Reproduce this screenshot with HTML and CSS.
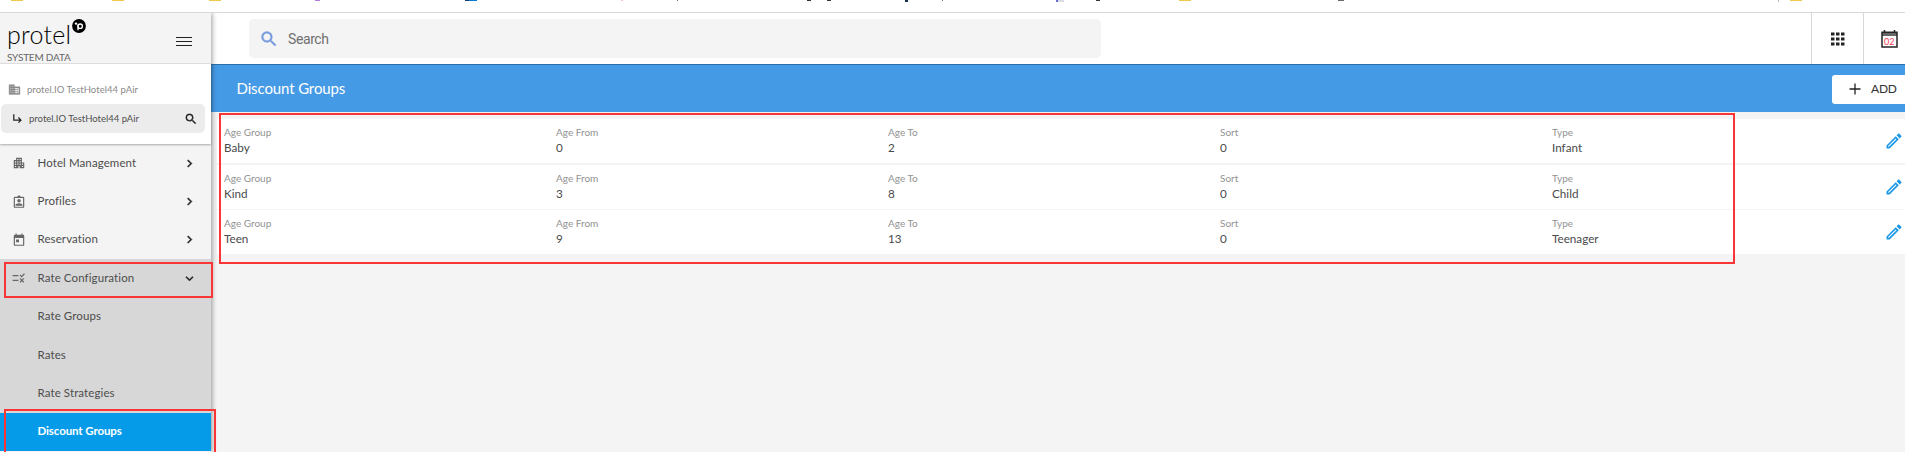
FILE: index.html
```html
<!DOCTYPE html>
<html lang="en">
<head>
<meta charset="utf-8">
<title>Discount Groups</title>
<link rel="stylesheet" href="styles.css">
</head>
<body>
<svg class="defs" aria-hidden="true">
  <symbol id="chev" viewBox="0 0 24 24"><path d="M10 6 8.6 7.4 13.2 12l-4.6 4.6L10 18l6-6z"/></symbol>
  <symbol id="glass" viewBox="0 0 24 24"><path d="M15.5 14h-.79l-.28-.27A6.47 6.47 0 0 0 16 9.5 6.5 6.5 0 1 0 9.5 16c1.61 0 3.09-.59 4.23-1.57l.27.28v.79l5 4.99L20.49 19l-4.99-5zm-6 0C7.01 14 5 11.99 5 9.5S7.01 5 9.5 5 14 7.01 14 9.5 11.99 14 9.5 14z"/></symbol>
  <symbol id="pencil" viewBox="0 0 24 24"><path d="M14.06 9.02l.92.92L5.92 19H5v-.92l9.06-9.06M17.66 3c-.25 0-.51.1-.7.29l-1.83 1.83 3.75 3.75 1.83-1.83a.996.996 0 0 0 0-1.41l-2.34-2.34c-.2-.2-.45-.29-.71-.29zm-3.6 3.19L3 17.25V21h3.75L17.81 9.94l-3.75-3.75z"/></symbol>
</svg>
<div class="bookmarks">
  <i class="bm yellow" style="left:11px"></i><i class="bm yellow" style="left:112px"></i><i class="bm yellow" style="left:209px"></i>
  <i class="bm purple" style="left:315px"></i><i class="bm blue" style="left:465px"></i><i class="bm pink" style="left:621px"></i>
  <i class="bm tick" style="left:677px"></i><i class="bm dark" style="left:807px"></i><i class="bm dark" style="left:827px"></i>
  <i class="bm navy" style="left:905px"></i><i class="bm tick" style="left:942px"></i><i class="bm lilac" style="left:1056px"></i>
  <i class="bm dark" style="left:1096px"></i><i class="bm yellow" style="left:1179px"></i><i class="bm gray" style="left:1338px"></i>
  <i class="bm sep" style="left:1778px"></i><i class="bm yellow" style="left:1790px"></i>
</div>
<div class="app">
  <aside class="side">
    <div class="brand">
      <div class="names">
        <div class="logo"><span class="word">protel</span><svg class="badge" viewBox="0 0 14 14"><circle cx="7" cy="7" r="6.9"/><g fill="none" stroke="#fff" stroke-width="1.3"><path d="M6 11.200V5.500"/><circle cx="8.200" cy="7.200" r="2.200"/></g><circle cx="4" cy="4.600" r="1.200" fill="#fff"/></svg></div>
        <div class="sub">SYSTEM DATA</div>
      </div>
      <svg class="burger" viewBox="0 0 16 11"><path d="M0 1.500h16M0 5.500h16M0 9.500h16"/></svg>
    </div>
    <div class="hotels">
      <div class="hotel"><svg class="building" viewBox="0 0 24 24"><path d="M12 7V3H2v18h20V7H12zM6 19H4v-2h2v2zm0-4H4v-2h2v2zm0-4H4V9h2v2zm0-4H4V5h2v2zm4 12H8v-2h2v2zm0-4H8v-2h2v2zm0-4H8V9h2v2zm0-4H8V5h2v2zm10 12h-8v-2h2v-2h-2v-2h2v-2h-2V9h8v10zm-2-8h-2v2h2v-2zm0 4h-2v2h2v-2z"/></svg><span>protel.IO TestHotel44 pAir</span></div>
      <div class="hotel current"><svg viewBox="0 0 24 24"><path d="m20 15-5.5 5.5-1.6-1.6 2.8-2.8H4V4h2.3v9.8h9.4L12.9 11l1.6-1.6z"/></svg><span>protel.IO TestHotel44 pAir</span><svg class="find"><use href="#glass"/></svg></div>
    </div>
    <nav class="menu">
      <a class="item"><svg viewBox="0 0 24 24"><path d="M17 11V3H7v4H3v14h8v-4h2v4h8V11h-4zM7 19H5v-2h2v2zm0-4H5v-2h2v2zm0-4H5V9h2v2zm4 4H9v-2h2v2zm0-4H9V9h2v2zm0-4H9V5h2v2zm4 8h-2v-2h2v2zm0-4h-2V9h2v2zm0-4h-2V5h2v2zm4 12h-2v-2h2v2zm0-4h-2v-2h2v2z"/></svg><span>Hotel Management</span><svg class="arrow"><use href="#chev"/></svg></a>
      <a class="item"><svg viewBox="0 0 24 24"><path d="M19 3h-4.2C14.4 1.800 13.300 1 12 1s-2.400.8-2.800 2H5a2 2 0 0 0-2 2v15a2 2 0 0 0 2 2h14a2 2 0 0 0 2-2V5a2 2 0 0 0-2-2zm0 17H5V5h14z"/><circle cx="12" cy="10" r="3"/><path d="M6 18.500v-1.300c0-2 4-3.200 6-3.200s6 1.200 6 3.200v1.300z"/></svg><span>Profiles</span><svg class="arrow"><use href="#chev"/></svg></a>
      <a class="item"><svg viewBox="0 0 24 24"><path d="M19 3h-1V1h-2v2H8V1H6v2H5a2 2 0 0 0-2 2v15a2 2 0 0 0 2 2h14a2 2 0 0 0 2-2V5a2 2 0 0 0-2-2zm0 17H5V8.500h14zM7 11h5v5H7z"/></svg><span>Reservation</span><svg class="arrow"><use href="#chev"/></svg></a>
      <div class="open">
        <a class="item"><svg viewBox="0 0 24 24"><path d="M16.500 11 13 7.500l1.400-1.400 2.100 2.100L20.700 4l1.400 1.400zM11 7H1v2h10zm10 6.400L19.600 12 17 14.600 14.400 12 13 13.400l2.600 2.600-2.600 2.600 1.400 1.400 2.600-2.600 2.600 2.600 1.400-1.400-2.600-2.600zM11 15H1v2h10z"/></svg><span>Rate Configuration</span><svg class="arrow down"><use href="#chev"/></svg></a>
        <a class="item child"><span>Rate Groups</span></a>
        <a class="item child"><span>Rates</span></a>
        <a class="item child"><span>Rate Strategies</span></a>
        <a class="item child active"><span>Discount Groups</span></a>
      </div>
    </nav>
  </aside>
  <main class="main">
    <header class="top">
      <div class="search"><svg><use href="#glass"/></svg><span>Search</span></div>
      <div class="tools">
        <div class="tool"><svg class="grid" viewBox="0 0 14 14"><path d="M0 .5h3.500v3H0zM5 .5h3.500v3H5zM10 .5h3.500v3H10zM0 5.500h3.500v3H0zM5 5.500h3.500v3H5zM10 5.500h3.500v3H10zM0 10.500h3.500v3H0zM5 10.500h3.500v3H5zM10 10.500h3.500v3H10z"/></svg></div>
        <div class="tool cal"><svg viewBox="0 0 17 18"><path d="M1 2h15v4H1z" fill="#666"/><path d="M1 2.200h15V17H1zM3.500 0v2.500M13.500 0v2.500" fill="none" stroke="#252525" stroke-width="1.500"/></svg><span class="day">02</span></div>
      </div>
    </header>
    <div class="title"><h1>Discount Groups</h1><button class="add"><svg viewBox="0 0 12 12"><path d="M6 .5v11M.5 6h11"/></svg><span>ADD</span></button></div>
    <section class="list">
      <div class="row"><dl><dt>Age Group</dt><dd>Baby</dd></dl><dl><dt>Age From</dt><dd>0</dd></dl><dl><dt>Age To</dt><dd>2</dd></dl><dl><dt>Sort</dt><dd>0</dd></dl><dl><dt>Type</dt><dd>Infant</dd></dl><svg class="edit"><use href="#pencil"/></svg></div>
      <div class="row"><dl><dt>Age Group</dt><dd>Kind</dd></dl><dl><dt>Age From</dt><dd>3</dd></dl><dl><dt>Age To</dt><dd>8</dd></dl><dl><dt>Sort</dt><dd>0</dd></dl><dl><dt>Type</dt><dd>Child</dd></dl><svg class="edit"><use href="#pencil"/></svg></div>
      <div class="row"><dl><dt>Age Group</dt><dd>Teen</dd></dl><dl><dt>Age From</dt><dd>9</dd></dl><dl><dt>Age To</dt><dd>13</dd></dl><dl><dt>Sort</dt><dd>0</dd></dl><dl><dt>Type</dt><dd>Teenager</dd></dl><svg class="edit"><use href="#pencil"/></svg></div>
    </section>
  </main>
</div>
<div class="mark mark-list"></div>
<div class="mark mark-rate"></div>
<div class="mark mark-discount"></div>
</body>
</html>
```
FILE: styles.css
```css
* { box-sizing: border-box; }
body { margin: 0; width: 1905px; height: 452px; overflow: hidden; position: relative; background: #fff; font-family: Lato, "Open Sans", sans-serif; color: #4a4a4a; }
svg { display: block; flex: none; fill: currentColor; }
.defs { position: absolute; width: 0; height: 0; }

.bookmarks { position: relative; height: 13px; border-bottom: 1px solid #d8d8d8; }
.bm { position: absolute; top: 0; height: 1px; width: 5px; }
.yellow { width: 12px; background: #efc94a; }
.purple { background: #b57be0; }
.blue { width: 12px; background: linear-gradient(90deg, #123f77 35%, #0b78d0 35%); }
.pink { width: 2px; background: #f3c3cc; }
.tick { width: 1px; background: #876070; }
.dark { width: 4px; background: #38333a; }
.navy { width: 3px; height: 2px; background: #17324e; }
.lilac { width: 8px; height: 2px; background: linear-gradient(90deg, #6a6bd0 30%, #dcdce4 30%); }
.gray { width: 6px; background: #6a6a70; }
.sep { width: 1px; height: 2px; background: #bbb; }

.app { display: flex; height: 439px; }
.side { width: 211px; flex: none; background: #f4f4f4; box-shadow: 1px 0 5px rgba(0,0,0,.4); z-index: 1; clip-path: inset(0 -8px 0 0); }
.brand { height: 51px; display: flex; justify-content: space-between; padding: 0 19px 0 7px; border-bottom: 1px solid #e2e2e2; }
.logo { display: flex; height: 38px; color: #000; }
.word { font-size: 25px; font-weight: 300; line-height: 42px; letter-spacing: .25px; width: 65px; }
.badge { width: 14px; height: 14px; margin-top: 6px; }
.sub { font-size: 10px; line-height: 13px; letter-spacing: -.2px; color: #666; white-space: nowrap; }
.burger { width: 16px; height: 11px; margin-top: 23px; stroke: #222; stroke-width: 1; }
.hotels { height: 80px; background: #fff; padding: 11px 6px 11px 1px; box-shadow: 0 1px 2px rgba(0,0,0,.3); position: relative; }
.hotel { height: 29px; display: flex; align-items: center; gap: 6px; padding-left: 7px; color: #8a8a8a; font-size: 9.500px; letter-spacing: .04px; }
.hotel svg { width: 13px; height: 13px; }
.hotel .building { stroke: currentColor; stroke-width: .7; }
.hotel.current { background: #ececec; border-radius: 5px; padding: 0 7px 0 10px; color: #505050; gap: 5px; letter-spacing: 0; }
.hotel.current svg { color: #222; }
.hotel .find { margin-left: auto; width: 14px; height: 14px; stroke: #222; stroke-width: .5; }
.item { display: flex; align-items: center; height: 38.400px; padding: 0 14px 0 12px; font-size: 11.500px; letter-spacing: .1px; color: #4d4d4d; }
.item span { padding-bottom: 2px; }
.item svg { width: 14px; height: 14px; margin-right: 11.500px; color: #666; }
.item .arrow { margin: 0 0 0 auto; width: 15px; height: 15px; color: #222; stroke: #222; stroke-width: .7; }
.item .down { transform: rotate(90deg); }
.open { background: #d7d7d7; }
.child { padding-left: 37.500px; }
.active { background: #069be8; color: #fff; font-weight: 700; letter-spacing: -.1px; }

.main { flex: 1; min-width: 0; background: #f4f4f4; }
.top { height: 51px; background: #fff; display: flex; justify-content: space-between; align-items: flex-start; padding-left: 38px; }
.search { margin-top: 6px; width: 852px; height: 39px; border-radius: 5px; background: #f4f4f4; display: flex; align-items: center; gap: 9px; padding-left: 10px; font: 14px Roboto, sans-serif; letter-spacing: -.4px; color: #707070; }
.search svg { width: 20px; height: 20px; color: #7499df; stroke: currentColor; stroke-width: .5; }
.tools { display: flex; height: 51px; }
.tool { width: 52px; border-left: 1px solid #d8d8d8; display: flex; align-items: center; justify-content: center; color: #222; }
.grid { width: 14px; height: 14px; margin-top: 1px; }
.cal { width: 42px; position: relative; justify-content: flex-start; padding-left: 17px; }
.cal svg { width: 17px; height: 18px; margin-top: 1px; }
.day { position: absolute; left: 20px; top: 24px; font-size: 9px; line-height: 10px; color: #f23b58; }
.title { height: 48px; background: #459ae6; border-top: 1px solid #2d70a9; display: flex; align-items: center; justify-content: space-between; padding-left: 25.500px; }
.title h1 { margin: 0; padding-bottom: 2px; font-size: 15px; font-weight: 400; letter-spacing: -.12px; color: #fff; }
.add { width: 73px; height: 29px; margin-top: 1px; border: 0; border-radius: 3px 0 0 3px; background: #fff; display: flex; align-items: center; padding: 0 0 0 17px; gap: 10px; font: 12px Lato, sans-serif; letter-spacing: -.2px; color: #333; }
.add span { padding-bottom: 1px; }
.add svg { width: 12px; height: 12px; stroke: #222; stroke-width: 1.300; }
.list { margin: 7px 0 0 6px; display: grid; grid-auto-rows: 44px; row-gap: 1.500px; }
.row { display: grid; grid-template-columns: repeat(5, 332px) 1fr; background: #fff; padding: 6px 0 0 7px; }
.row dl { margin: 0; }
.row dt { font-size: 10px; line-height: 14px; color: #929292; }
.row dd { margin: 1px 0 0; font-size: 11.700px; line-height: 15px; color: #4a4a4a; }
.edit { width: 20px; height: 20px; color: #1a97e6; justify-self: end; margin: 6px 3px 0 0; }

.mark { position: absolute; border: 2px solid #fa3535; z-index: 2; }
.mark-list { left: 219px; top: 113px; width: 1516px; height: 151px; }
.mark-rate { left: 4px; top: 262px; width: 209px; height: 36px; }
.mark-discount { left: 4px; top: 409px; width: 212px; height: 50px; }
```
